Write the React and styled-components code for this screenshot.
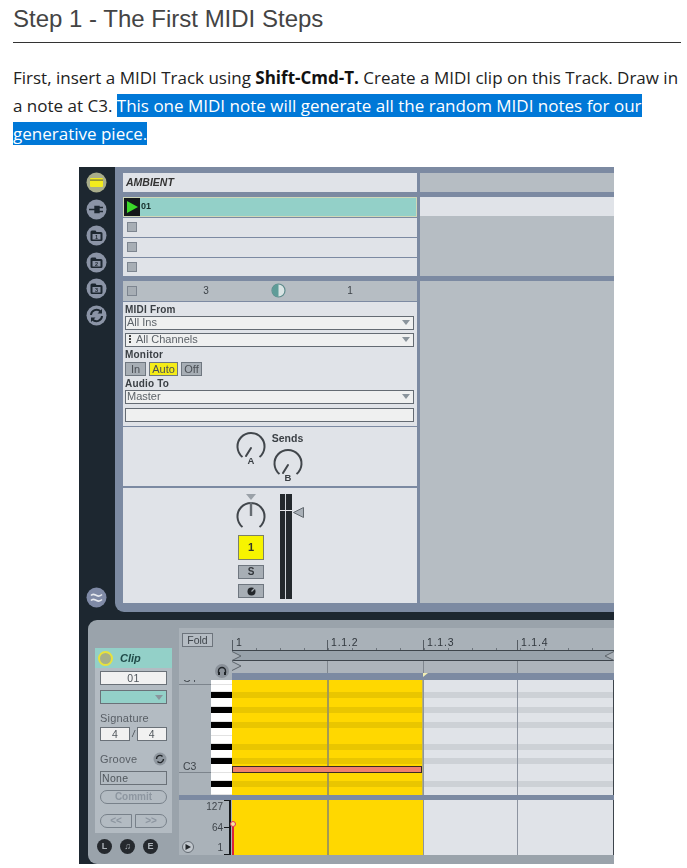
import styled, { createGlobalStyle } from "styled-components";

const SLATE = "#7c8aa2";
const DARK = "#1d2730";
const LIGHT = "#e0e3e8";
const GREY = "#b6bdc3";
const TEAL = "#93d0c8";
const GOLD = "#ffd800";
const UI_FONT = `"Liberation Sans", Arial, sans-serif`;

// piano roll rows, top to bottom, heights as they are in the screenshot
const KEYS = [
  { h: 4.5, name: "C4" },
  { h: 7.5 },
  { h: 5.5, black: true },
  { h: 9.5 },
  { h: 5.5, black: true },
  { h: 9.5 },
  { h: 5.5, black: true },
  { h: 8.5 },
  { h: 8 },
  { h: 5.5, black: true },
  { h: 8.5 },
  { h: 6, black: true },
  { h: 9, name: "C3" },
  { h: 8 },
  { h: 5.5, black: true },
  { h: 8.5 },
];
const KEY_ROWS = KEYS.map((k) => `${k.h}px`).join(" ");
const BAR_LINES = [95, 191, 285];
const BARS = ["1", "1.1.2", "1.1.3", "1.1.4"];

const GlobalStyle = createGlobalStyle`
  body {
    margin: 0;
    background: #fff;
  }
`;

const Page = styled.div`
  padding: 0 6px 0 13px;
`;

const Title = styled.h2`
  margin: 0;
  padding: 5px 0 9px;
  height: 28px;
  font: 400 24px/28px ${UI_FONT};
  color: #444;
  border-bottom: 1px solid #333;
`;

const Para = styled.p`
  margin: 0;
  padding-top: 21px;
  font: 400 17px/28px "Open Sans", sans-serif;
  color: #222;
  & b {
    font-weight: 700;
    color: #111;
  }
`;

const Selected = styled.span`
  background: #0078d7;
  color: #fff;
`;

const Shot = styled.div`
  width: 535px;
  height: 697px;
  margin: 19px 0 0 66px;
  background: ${DARK};
  overflow: hidden;
  filter: blur(0.35px);
  font-family: ${UI_FONT};
  color: #3c4248;
`;

/* session view */
const Session = styled.div`
  display: flex;
  height: 445px;
`;

const Sidebar = styled.div`
  width: 36px;
  flex: none;
  display: flex;
  flex-direction: column;
  align-items: center;
  padding: 5px 2px 4px 0;
  box-sizing: border-box;
  gap: 5.5px;
`;

const SideIcon = styled.svg`
  width: 21px;
  height: 21px;
  flex: none;
  margin-top: ${(p) => (p.$push ? "auto" : "0")};
`;

const Mixer = styled.div`
  flex: 1;
  display: flex;
  gap: 3px;
  padding: 6px 0 9px 8px;
  background: ${SLATE};
  border-bottom-left-radius: 9px;
`;

const TrackCol = styled.div`
  width: 294px;
  flex: none;
  display: flex;
  flex-direction: column;
`;

const RestCol = styled.div`
  flex: 1;
  display: flex;
  flex-direction: column;
`;

const RestBlock = styled.div`
  height: ${(p) => p.$h}px;
  flex: ${(p) => (p.$h ? "none" : "1")};
  margin-bottom: ${(p) => p.$gap || 0}px;
  background: ${(p) => (p.$light ? LIGHT : GREY)};
`;

const TrackTitle = styled.div`
  height: 19px;
  margin-bottom: 5px;
  padding-left: 3px;
  background: ${LIGHT};
  font: italic 700 10.5px/19px ${UI_FONT};
  color: #333;
`;

const ClipSlot = styled.div`
  height: 20px;
  box-sizing: border-box;
  display: flex;
  align-items: center;
  background: ${TEAL};
  border: 1px solid #333c3c;
  outline: 1px solid #cfd8b8;
  outline-offset: -1px;
  font: 700 9px/1 ${UI_FONT};
  color: #16302c;
`;

const PlayCell = styled.div`
  width: 16px;
  height: 100%;
  margin-right: 1px;
  display: flex;
  align-items: center;
  justify-content: center;
  background: #14181a;
`;

const Slot = styled.div`
  height: ${(p) => p.$h || 20}px;
  box-sizing: border-box;
  display: flex;
  align-items: center;
  padding-left: 4px;
  background: ${LIGHT};
  border-top: 1px solid ${SLATE};
`;

const Stop = styled.span`
  width: 10px;
  height: 10px;
  box-sizing: border-box;
  background: #a7aeb5;
  border: 1px solid #7d8590;
`;

const Status = styled.div`
  height: 20px;
  margin-top: 5px;
  display: grid;
  grid-template-columns: 43px 72px 72px 72px;
  align-items: center;
  padding-left: 4px;
  box-sizing: border-box;
  background: ${GREY};
  font: 400 10px/1 ${UI_FONT};
  color: #3c4248;
`;

const StatusCell = styled.span`
  justify-self: center;
`;

const Routing = styled.div`
  height: 126px;
  box-sizing: border-box;
  padding: 2px 3px 0 2px;
  background: ${LIGHT};
  border-top: 1px solid ${SLATE};
`;

const Label = styled.div`
  font: 700 10px/12px ${UI_FONT};
  letter-spacing: 0.2px;
  color: #3a3f44;
`;

const Select = styled.div`
  height: 14px;
  margin: ${(p) => p.$mt || 0}px 0 ${(p) => p.$mb || 0}px;
  box-sizing: border-box;
  display: flex;
  align-items: center;
  justify-content: space-between;
  padding: 0 3px 0 1px;
  background: ${(p) => p.$bg || "#eff0f0"};
  border: 1px solid #646b73;
  font: 400 11px/1 ${UI_FONT};
  color: #5d6369;
`;

const Caret = styled.span`
  width: 0;
  height: 0;
  border-left: 4px solid transparent;
  border-right: 4px solid transparent;
  border-top: 5px solid #8a949c;
`;

const Dots = styled.i`
  display: inline-block;
  width: 2px;
  height: 9px;
  margin: 0 5px 0 2px;
  vertical-align: -1px;
  background: repeating-linear-gradient(#444 0 2px, transparent 2px 3px);
`;

const ToggleRow = styled.div`
  display: flex;
  gap: 3px;
  margin: 1px 0 2px;
`;

const Toggle = styled.div`
  width: ${(p) => p.$w}px;
  height: 14px;
  box-sizing: border-box;
  text-align: center;
  background: ${(p) => (p.$on ? "#f5ec17" : "#a7aeb5")};
  border: 1px solid #6f7780;
  font: 400 11px/12px ${UI_FONT};
  color: #4b5056;
`;

const Sends = styled.div`
  height: 59px;
  margin-top: 1px;
  display: flex;
  justify-content: center;
  gap: 4px;
  padding: 5px 0 0 1px;
  box-sizing: border-box;
  background: ${LIGHT};
`;

const SendCol = styled.div`
  width: 35px;
  display: flex;
  flex-direction: column;
  align-items: center;
  font: 700 10.5px/12px ${UI_FONT};
  color: #3a3f44;
`;

const Knob = styled.svg`
  width: 30px;
  height: 34px;
  flex: none;
  display: block;
  margin-top: ${(p) => p.$mt || 0}px;
`;

const Fader = styled.div`
  flex: 1;
  margin-top: 2px;
  display: flex;
  justify-content: center;
  gap: 16px;
  padding: 6px 10px 0 0;
  box-sizing: border-box;
  background: ${LIGHT};
`;

const ChannelCol = styled.div`
  width: 26px;
  display: flex;
  flex-direction: column;
  align-items: center;
`;

const TrackNumber = styled.div`
  width: 26px;
  height: 25px;
  margin: 4px 0 5px;
  box-sizing: border-box;
  text-align: center;
  background: #f7f400;
  border: 1px solid #7c8168;
  font: 700 11px/23px ${UI_FONT};
  color: #33362a;
`;

const ChannelBtn = styled.div`
  width: 26px;
  height: 14px;
  margin-bottom: 5px;
  box-sizing: border-box;
  display: flex;
  align-items: center;
  justify-content: center;
  background: #a7aeb5;
  border: 1px solid #6f7780;
  font: 700 10px/1 ${UI_FONT};
  color: #33373c;
`;

const Meter = styled.div`
  position: relative;
  width: 12px;
  height: 105px;
  background: linear-gradient(to right, #23282c 0 5.5px, #cfd3d8 5.5px 6.5px, #23282c 6.5px);
`;

const Level = styled.div`
  position: absolute;
  top: 16px;
  left: 0;
  width: 12px;
  height: 1px;
  background: #e6e8ea;
`;

const FaderArrow = styled.svg`
  position: absolute;
  top: 13px;
  left: 13px;
  width: 11px;
  height: 11px;
`;

/* clip view */
const ClipView = styled.div`
  display: flex;
  height: 244px;
  margin: 8px 0 0 9px;
  padding: 8px 0 9px 7px;
  box-sizing: border-box;
  background: #9aa3ab;
  border-radius: 9px 0 0 9px;
`;

const ClipCol = styled.div`
  width: 77px;
  margin-right: 7px;
  flex: none;
  display: flex;
  flex-direction: column;
  padding-top: 20px;
`;

const ClipBox = styled.div`
  height: 185px;
  box-sizing: border-box;
  background: #b3bbc2;
`;

const ClipHead = styled.div`
  height: 20px;
  display: flex;
  align-items: center;
  gap: 7px;
  padding-left: 3px;
  background: ${TEAL};
  font: italic 700 11px/1 ${UI_FONT};
  color: #1f4a48;
`;

const InfoDot = styled.span`
  width: 11px;
  height: 11px;
  border-radius: 50%;
  background: #a7b08a;
  border: 2px solid #e8e23c;
  flex: none;
`;

const ClipBody = styled.div`
  padding: 3px 5px 0 5px;
  display: flex;
  flex-direction: column;
`;

const Field = styled.div`
  flex: ${(p) => (p.$grow ? 1 : "none")};
  height: 14px;
  box-sizing: border-box;
  margin-top: ${(p) => p.$mt || 0}px;
  text-align: ${(p) => (p.$left ? "left" : "center")};
  padding-left: ${(p) => (p.$left ? 1 : 0)}px;
  background: ${(p) => p.$bg || "#f1f1f1"};
  border: 1px solid #6a7178;
  font: 400 10.5px/12px ${UI_FONT};
  letter-spacing: 0.3px;
  color: #50565c;
`;

const DropField = styled(Field)`
  display: flex;
  align-items: center;
  justify-content: flex-end;
  padding-right: 3px;
`;

const ClipLabel = styled.div`
  display: flex;
  align-items: center;
  justify-content: space-between;
  margin-top: ${(p) => p.$mt}px;
  height: 12px;
  font: 400 11px/12px ${UI_FONT};
  letter-spacing: 0.2px;
  color: #585e65;
`;

const SigRow = styled.div`
  display: flex;
  align-items: center;
  gap: 2px;
  margin-top: 3px;
  font: italic 400 9px/1 ${UI_FONT};
`;

const Pill = styled.div`
  flex: 1;
  height: 14px;
  margin-top: ${(p) => p.$mt || 0}px;
  box-sizing: border-box;
  text-align: center;
  border: 1px solid #78818a;
  border-radius: ${(p) => p.$radius || "7px"};
  font: 700 10px/12px ${UI_FONT};
  color: #8d96a0;
`;

const PillRow = styled.div`
  display: flex;
  gap: 3px;
  margin-top: 10px;
`;

const RoundRow = styled.div`
  display: flex;
  gap: 8px;
  padding: 6px 0 0 2px;
`;

const RoundBtn = styled.div`
  width: 15px;
  height: 15px;
  border-radius: 50%;
  background: #25292e;
  color: #aeb4ba;
  font: 700 9px/15px ${UI_FONT};
  text-align: center;
`;

const Editor = styled.div`
  flex: 1;
  display: grid;
  grid-template-columns: 53px 1fr;
  grid-template-rows: 22px 11px 12px 7px 115px 5px 55px;
  background: #aab2b9;
`;

const FoldCell = styled.div`
  grid-row: 1 / 5;
  display: flex;
  flex-direction: column;
  align-items: flex-start;
  padding: 5px 0 0 3px;
`;

const Fold = styled.div`
  width: 31px;
  height: 14px;
  box-sizing: border-box;
  text-align: center;
  background: #b5bcc3;
  border: 1px solid #6d747c;
  font: 400 10.5px/12px ${UI_FONT};
  color: #3f454b;
`;

const Phones = styled.div`
  width: 14px;
  height: 14px;
  margin: 17px 0 0 33px;
  border-radius: 50%;
  background: #8a9199;
  display: flex;
  align-items: center;
  justify-content: center;
`;

const Ruler = styled.div`
  display: grid;
  grid-template-columns: 95px 96px 94px 1fr;
  background:
    repeating-linear-gradient(to right, #6d747c 0 1px, transparent 1px 24px) 0 100% / 100% 2px no-repeat,
    #a9b1b8;
`;

const RulerCell = styled.div`
  padding: 8px 0 0 4px;
  font: 400 10.5px/12px ${UI_FONT};
  letter-spacing: 0.8px;
  color: #30363c;
  background: linear-gradient(#555c63, #555c63) 0 12px / 1px 10px no-repeat;
`;

const LoopStrip = styled.div`
  display: flex;
  justify-content: space-between;
  align-items: center;
  background: #98a2ab;
  border-top: 1px solid #3d444b;
  border-bottom: 1px solid #3d444b;
  box-sizing: border-box;
`;

const Marker = styled.svg`
  width: 10px;
  height: 10px;
  display: block;
`;

const MarkerStrip = styled.div`
  position: relative;
  background: #adb4bb;
`;

const Band = styled.div`
  position: relative;
  background: ${SLATE};
  grid-column: ${(p) => (p.$wide ? "1 / 3" : "auto")};
`;

const StartFlag = styled.span`
  position: absolute;
  top: 0;
  left: 191px;
  width: 0;
  height: 0;
  border-top: 4px solid #f1eeb4;
  border-right: 5px solid transparent;
`;

const Keyboard = styled.div`
  display: grid;
  grid-template-rows: ${KEY_ROWS};
  overflow: hidden;
`;

const KeyRow = styled.div`
  display: flex;
  min-height: 0;
`;

const KeyName = styled.div`
  flex: 1;
  display: flex;
  align-items: flex-end;
  padding-left: 4px;
  font: 400 10.5px/12px ${UI_FONT};
  color: #3f454b;
  border-bottom: ${(p) => (p.$line ? "1px solid #7c848c" : "0")};
`;

const Key = styled.div`
  width: 21px;
  box-sizing: border-box;
  background: ${(p) => (p.$black ? "#000" : "#fff")};
  border-bottom: ${(p) => (p.$black ? "0" : "1px solid #e2e2e2")};
`;

const Lanes = styled.div`
  position: relative;
  display: grid;
  grid-template-rows: ${KEY_ROWS};
  border-right: 1px solid #3d444b;
`;

const Lane = styled.div`
  background: linear-gradient(
    to right,
    ${(p) => (p.$black ? "#e9c600" : GOLD)} 0 191px,
    ${(p) => (p.$black ? "#cdd1d6" : LIGHT)} 191px
  );
`;

const BarLine = styled.div`
  position: absolute;
  top: 0;
  bottom: 0;
  left: ${(p) => p.$x}px;
  width: ${(p) => p.$w || 1}px;
  background: ${(p) => p.$color || "#8d94a0"};
`;

const Note = styled.div`
  position: absolute;
  top: 86px;
  left: 0;
  width: 190px;
  height: 7px;
  box-sizing: border-box;
  background: #f0806e;
  border: 1px solid #3a2a24;
`;

const VelocityScale = styled.div`
  position: relative;
  display: flex;
  align-items: flex-end;
  padding: 0 1px 2px 3px;
`;

const PlayBall = styled.div`
  width: 12px;
  height: 12px;
  box-sizing: border-box;
  border-radius: 50%;
  background: #c2c8ce;
  border: 1px solid #646b73;
  display: flex;
  align-items: center;
  justify-content: center;
`;

const ScaleNumbers = styled.div`
  position: absolute;
  top: 0;
  bottom: 0;
  right: 1px;
  width: 30px;
  display: flex;
  flex-direction: column;
  justify-content: space-between;
  align-items: flex-end;
  padding: 0 6px 0 0;
  box-sizing: border-box;
  border-right: 2px solid #15181b;
  background:
    linear-gradient(#15181b, #15181b) 100% 0 / 5px 1px no-repeat,
    linear-gradient(#15181b, #15181b) 100% 50% / 5px 1px no-repeat,
    linear-gradient(#15181b, #15181b) 100% 100% / 5px 1px no-repeat;
  font: 400 10px/14px ${UI_FONT};
  color: #3f454b;
`;

const VelocityLane = styled.div`
  position: relative;
  background: linear-gradient(to right, ${GOLD} 0 191px, ${LIGHT} 191px);
  border-right: 1px solid #3d444b;
`;

const VelocityStem = styled.div`
  position: absolute;
  left: 0;
  top: 24px;
  bottom: 0;
  width: 2px;
  background: #d8233c;
  &::before {
    content: "";
    position: absolute;
    top: -3px;
    left: -2px;
    width: 6px;
    height: 6px;
    box-sizing: border-box;
    border-radius: 50%;
    border: 1.5px solid #e0305a;
    background: #f2e4a0;
  }
`;

const Disc = ({ children, fill = "#8b94a6", push }) => (
  <SideIcon viewBox="0 0 21 21" $push={push}>
    <circle cx="10.5" cy="10.5" r="10" fill={fill} />
    {children}
  </SideIcon>
);

const Camera = ({ n }) => (
  <Disc>
    <path d="M4.5 7q0-1.500 1.500-1.500h3.500l1 1.500h4.500q1.500 0 1.500 1.500v6q0 1.500-1.500 1.500H6q-1.500 0-1.500-1.500z" fill="#1d2730" />
    <rect x="6.500" y="9" width="8" height="5.500" fill="#8b94a6" />
    <text x="10.5" y="14" textAnchor="middle" fontSize="5.5" fontWeight="700" fill="#1d2730">
      {n}
    </text>
  </Disc>
);

const Dial = ({ letter, pointer = "M15 16 L10 24", mt }) => (
  <Knob viewBox="0 0 30 34" $mt={mt}>
    <path d="M6.5 25 A13.5 13.5 0 1 1 23.5 25" fill="none" stroke="#41464b" strokeWidth="2" />
    <path d={pointer} stroke="#41464b" strokeWidth="2" strokeLinecap="round" />
    <text x="15" y="32" textAnchor="middle" fontSize="9.5" fontWeight="700" fill="#3a3f44">
      {letter}
    </text>
  </Knob>
);

const App = () => {
  return (
    <Page>
      <GlobalStyle />
      <Title>Step 1 - The First MIDI Steps</Title>
      <Para>
        First, insert a MIDI Track using <b>Shift-Cmd-T.</b> Create a MIDI clip on this Track. Draw
        in a note at C3.{" "}
        <Selected>
          This one MIDI note will generate all the random MIDI notes for our generative piece.
        </Selected>
      </Para>

      <Shot>
        <Session>
          <Sidebar>
            <Disc fill="#a9ad8a">
              <rect x="4" y="6" width="13" height="9" rx="1" fill="#f4ec1e" />
              <rect x="4" y="7.5" width="13" height="1.2" fill="#6d6f3c" />
            </Disc>
            <Disc>
              <path d="M3 10.5h6M13 8v5M9 7.5h4v6H9z" stroke="#1d2730" strokeWidth="1.4" fill="#1d2730" />
              <path d="M13 8.5h4M13 12.5h4" stroke="#1d2730" strokeWidth="1.6" />
            </Disc>
            <Camera n="1" />
            <Camera n="2" />
            <Camera n="3" />
            <Disc>
              <path d="M5 10a5.5 5.5 0 0 1 9.5-3.5M16 11a5.5 5.5 0 0 1-9.5 3.5" fill="none" stroke="#1d2730" strokeWidth="2" />
              <path d="M16 4v4.5h-4.5M5 17v-4.5h4.5" fill="#1d2730" />
            </Disc>
            <Disc fill="#7f8aa6" push>
              <path d="M5 8.5c2-2.5 3.5-1 5.5 0s3.5 1 5.5-1M5 13.5c2-2.5 3.5-1 5.5 0s3.5 1 5.5-1" fill="none" stroke="#e6e9ee" strokeWidth="1.6" />
            </Disc>
          </Sidebar>

          <Mixer>
            <TrackCol>
              <TrackTitle>AMBIENT</TrackTitle>
              <ClipSlot>
                <PlayCell>
                  <svg width="13" height="14" viewBox="0 0 13 14">
                    <path d="M1 1 L12 7 L1 13 Z" fill="#3bd92a" />
                  </svg>
                </PlayCell>
                01
              </ClipSlot>
              <Slot>
                <Stop />
              </Slot>
              <Slot>
                <Stop />
              </Slot>
              <Slot $h={19}>
                <Stop />
              </Slot>
              <Status>
                <Stop />
                <StatusCell>3</StatusCell>
                <StatusCell>
                  <svg width="15" height="15" viewBox="0 0 15 15" display="block">
                    <circle cx="7.5" cy="7.5" r="6.5" fill="#d9e4e4" stroke="#5f8c8c" strokeWidth="1.2" />
                    <path d="M7.5 1a6.5 6.5 0 0 0 0 13z" fill="#5f9c98" />
                  </svg>
                </StatusCell>
                <StatusCell>1</StatusCell>
              </Status>
              <Routing>
                <Label>MIDI From</Label>
                <Select>
                  All Ins
                  <Caret />
                </Select>
                <Select $mt={3} $mb={2}>
                  <span>
                    <Dots />
                    All Channels
                  </span>
                  <Caret />
                </Select>
                <Label>Monitor</Label>
                <ToggleRow>
                  <Toggle $w={21}>In</Toggle>
                  <Toggle $w={29} $on>
                    Auto
                  </Toggle>
                  <Toggle $w={21}>Off</Toggle>
                </ToggleRow>
                <Label>Audio To</Label>
                <Select>
                  Master
                  <Caret />
                </Select>
                <Select $mt={4} />
              </Routing>
              <Sends>
                <Dial letter="A" />
                <SendCol>
                  Sends
                  <Dial letter="B" mt={5} />
                </SendCol>
              </Sends>
              <Fader>
                <ChannelCol>
                  <svg width="12" height="6" viewBox="0 0 12 6" display="block">
                    <path d="M1 0h10L6 6z" fill="#9aa1a8" />
                  </svg>
                  <svg width="30" height="31" viewBox="0 0 30 31" display="block">
                    <path d="M6.5 27 A13.5 13.5 0 1 1 23.5 27" fill="none" stroke="#41464b" strokeWidth="2" />
                    <path d="M15 2 V16" stroke="#666c72" strokeWidth="2.4" />
                  </svg>
                  <TrackNumber>1</TrackNumber>
                  <ChannelBtn>S</ChannelBtn>
                  <ChannelBtn>
                    <svg width="9" height="9" viewBox="0 0 9 9">
                      <circle cx="4.5" cy="4.5" r="4" fill="#23272b" />
                      <path d="M4.5 4.5 L8 1" stroke="#a7aeb5" strokeWidth="1.2" />
                    </svg>
                  </ChannelBtn>
                </ChannelCol>
                <Meter>
                  <Level />
                  <FaderArrow viewBox="0 0 11 11">
                    <path d="M10.5 .5 V10.5 L.5 5.5 Z" fill="#a9b0b7" stroke="#62696f" />
                  </FaderArrow>
                </Meter>
              </Fader>
            </TrackCol>
            <RestCol>
              <RestBlock $h={19} $gap={5} />
              <RestBlock $h={19} $light />
              <RestBlock $h={60} $gap={5} />
              <RestBlock />
            </RestCol>
          </Mixer>
        </Session>

        <ClipView>
          <ClipCol>
            <ClipBox>
              <ClipHead>
                <InfoDot />
                Clip
              </ClipHead>
              <ClipBody>
                <Field>01</Field>
                <DropField $mt={5} $bg={TEAL}>
                  <Caret />
                </DropField>
                <ClipLabel $mt={8}>Signature</ClipLabel>
                <SigRow>
                  <Field $grow>4</Field>
                  /
                  <Field $grow>4</Field>
                </SigRow>
                <ClipLabel $mt={12}>
                  Groove
                  <svg width="14" height="14" viewBox="0 0 14 14">
                    <circle cx="7" cy="7" r="6.5" fill="#8f979f" />
                    <path d="M3.5 7a3.5 3.5 0 0 1 6-2.5M10.5 7a3.5 3.5 0 0 1-6 2.5" fill="none" stroke="#22262a" strokeWidth="1.4" />
                  </svg>
                </ClipLabel>
                <Field $left $mt={6} $bg="#b3bbc2">
                  None
                </Field>
                <Pill $mt={5}>Commit</Pill>
                <PillRow>
                  <Pill $radius="7px 0 0 7px">&lt;&lt;</Pill>
                  <Pill $radius="0 7px 7px 0">&gt;&gt;</Pill>
                </PillRow>
              </ClipBody>
            </ClipBox>
            <RoundRow>
              <RoundBtn>L</RoundBtn>
              <RoundBtn>♫</RoundBtn>
              <RoundBtn>E</RoundBtn>
            </RoundRow>
          </ClipCol>

          <Editor>
            <FoldCell>
              <Fold>Fold</Fold>
              <Phones>
                <svg width="10" height="10" viewBox="0 0 10 10">
                  <path d="M1.5 7V5a3.5 3.5 0 0 1 7 0v2" fill="none" stroke="#1f2428" strokeWidth="1.4" />
                  <rect x="1" y="6" width="2" height="3" fill="#1f2428" />
                  <rect x="7" y="6" width="2" height="3" fill="#1f2428" />
                </svg>
              </Phones>
            </FoldCell>
            <Ruler>
              {BARS.map((bar) => (
                <RulerCell key={bar}>{bar}</RulerCell>
              ))}
            </Ruler>
            <LoopStrip>
              <Marker viewBox="0 0 10 10">
                <path d="M0 .5 L9 5 L0 9.5" fill="#a9b0b7" stroke="#5d646b" />
              </Marker>
              <Marker viewBox="0 0 10 10">
                <path d="M10 .5 L1 5 L10 9.5" fill="#a9b0b7" stroke="#5d646b" />
              </Marker>
            </LoopStrip>
            <MarkerStrip>
              <Marker viewBox="0 0 10 10">
                <path d="M0 .5 L9 5 L0 9.5" fill="#a9b0b7" stroke="#5d646b" />
              </Marker>
              {BAR_LINES.map((x) => (
                <BarLine key={x} $x={x} $color="#7f868e" />
              ))}
            </MarkerStrip>
            <Band>
              <StartFlag />
            </Band>

            <Keyboard>
              {KEYS.map((key, i) => (
                <KeyRow key={i}>
                  <KeyName $line={!!key.name}>{key.name}</KeyName>
                  <Key $black={key.black} />
                </KeyRow>
              ))}
            </Keyboard>
            <Lanes>
              {KEYS.map((key, i) => (
                <Lane key={i} $black={key.black} />
              ))}
              <BarLine $x={95} $w={2} $color="#a49a52" />
              <BarLine $x={190} $color="#b8b070" />
              <BarLine $x={191} />
              <BarLine $x={285} />
              <Note />
            </Lanes>

            <Band $wide />

            <VelocityScale>
              <PlayBall>
                <svg width="6" height="6" viewBox="0 0 6 6">
                  <path d="M.5 0 L6 3 L.5 6 Z" fill="#23272b" />
                </svg>
              </PlayBall>
              <ScaleNumbers>
                <span>127</span>
                <span>64</span>
                <span>1</span>
              </ScaleNumbers>
            </VelocityScale>
            <VelocityLane>
              <BarLine $x={95} $w={2} $color="#a49a52" />
              <BarLine $x={191} />
              <BarLine $x={285} />
              <VelocityStem />
            </VelocityLane>
          </Editor>
        </ClipView>
      </Shot>
    </Page>
  );
};

export default App;
